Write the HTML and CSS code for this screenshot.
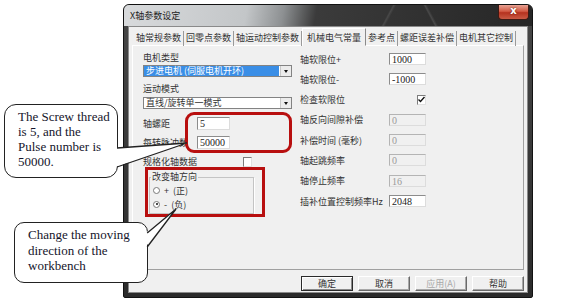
FILE: index.html
```html
<!DOCTYPE html>
<html lang="zh">
<head>
    <meta charset="UTF-8">
    <title>X轴参数设定</title>
    <link rel="stylesheet" href="styles.css">
</head>
<body>

<div class="stage">

    <!-- Dialogfenster -->
    <div class="window">
        <div class="titlebar">
            <span class="title">X轴参数设定</span>
            <span class="close">x</span>
        </div>

        <div class="client">
            <div class="tabs">
                <span class="tab">轴常规参数</span>
                <span class="tab">回零点参数</span>
                <span class="tab">轴运动控制参数</span>
                <span class="tab active">机械电气常量</span>
                <span class="tab">参考点</span>
                <span class="tab">螺距误差补偿</span>
                <span class="tab">电机其它控制</span>
            </div>

            <div class="panel">
                <div class="col-left">
                    <div class="caption">电机类型</div>
                    <div class="combo selected">
                        <span class="combo-text">步进电机 (伺服电机开环)</span>
                        <span class="combo-btn"></span>
                    </div>
                    <div class="caption second">运动模式</div>
                    <div class="combo second">
                        <span class="combo-text">直线/旋转单一模式</span>
                        <span class="combo-btn"></span>
                    </div>

                    <div class="field first">
                        <span class="field-label">轴螺距</span>
                        <span class="edit">5</span>
                    </div>
                    <div class="field">
                        <span class="field-label">每转脉冲数</span>
                        <span class="edit">50000</span>
                    </div>
                    <div class="field">
                        <span class="field-label wide">规格化轴数据</span>
                        <span class="check"></span>
                    </div>

                    <fieldset class="group">
                        <legend>改变轴方向</legend>
                        <div class="radio-row"><span class="radio"></span>+&nbsp;&nbsp;(正)</div>
                        <div class="radio-row"><span class="radio on"></span>-&nbsp;&nbsp;(负)</div>
                    </fieldset>
                </div>

                <div class="col-right">
                    <div class="row"><span class="row-label">轴软限位+</span><span class="edit">1000</span></div>
                    <div class="row"><span class="row-label">轴软限位-</span><span class="edit">-1000</span></div>
                    <div class="row">
                        <span class="row-label">检查软限位</span>
                        <span class="check on">
                            <svg width="7" height="7" viewBox="0 0 7 7"><path d="M0.5 3.5 L2.5 5.5 L6.5 1" fill="none" stroke="#111" stroke-width="1.4"/></svg>
                        </span>
                    </div>
                    <div class="row"><span class="row-label">轴反向间隙补偿</span><span class="edit off">0</span></div>
                    <div class="row"><span class="row-label">补偿时间 (毫秒)</span><span class="edit off">0</span></div>
                    <div class="row"><span class="row-label">轴起跳频率</span><span class="edit off">0</span></div>
                    <div class="row"><span class="row-label">轴停止频率</span><span class="edit off">16</span></div>
                    <div class="row"><span class="row-label">插补位置控制频率Hz</span><span class="edit">2048</span></div>
                </div>
            </div>

            <div class="buttons">
                <span class="btn default">确定</span>
                <span class="btn">取消</span>
                <span class="btn disabled">应用(A)</span>
                <span class="btn">帮助</span>
            </div>
        </div>
    </div>

    <!-- Markierungen und Sprechblasen -->
    <div class="mark mark-round"></div>
    <div class="mark mark-square"></div>

    <div class="bubble bubble-a">The Screw thread<br>is 5, and the<br>Pulse number is<br>50000.</div>
    <div class="bubble bubble-b">Change the moving<br>direction of the<br>workbench</div>

    <svg class="tails" width="563" height="300">
        <polygon points="115.5,148 187,143 115.5,167" fill="#fff"/>
        <polyline points="117,148 187,143 117,167" fill="none" stroke="#222" stroke-width="1.3"/>
        <polygon points="145.5,233 176,209 145.5,247" fill="#fff"/>
        <polyline points="147.2,233 176,209 147.2,247" fill="none" stroke="#222" stroke-width="1.3"/>
    </svg>
</div>

</body>
</html>
```

FILE: styles.css
```css
* {
    box-sizing: border-box;
}

body {
    margin: 0;
    background-color: #fff;
}

.stage {
    position: relative;
    width: 563px;
    height: 300px;
    overflow: hidden;
    padding: 4px 0 0 123px;
    font-family: "Noto Sans CJK SC", sans-serif;
    font-size: 9px;
    color: #333;
}

/* Fenster */
.window {
    width: 410px;
    height: 294px;
    display: flex;
    flex-direction: column;
    background: linear-gradient(#474747, #2b2b2b);
    border: 1px solid #121212;
    border-radius: 6px 6px 2px 2px;
}

.titlebar {
    height: 21px;
    display: flex;
    justify-content: space-between;
    align-items: flex-start;
    padding-left: 6px;
    border-radius: 5px 5px 0 0;
    background:
        linear-gradient(62deg, transparent 0 74%, rgba(255, 255, 255, 0.12) 74.4%, transparent 75%),
        linear-gradient(118deg, transparent 0 64%, rgba(255, 255, 255, 0.1) 64.4%, transparent 65%),
        linear-gradient(100deg, #d8dadc 0%, #c3c6c8 30%, #8d9092 39%, #3b3b3b 47%, #262626 100%);
}

.title {
    line-height: 21px;
    color: #1c1c1c;
}

.close {
    width: 31px;
    height: 15px;
    margin-right: 3px;
    text-align: center;
    line-height: 12px;
    font-family: "DejaVu Sans", sans-serif;
    font-size: 10px;
    font-weight: bold;
    color: #fff;
    text-shadow: 0 0 2px #5a1208;
    background: linear-gradient(#e7a394, #d25a44 45%, #b5321f 55%, #c95a44);
    border: 1px solid #3d1a14;
    border-top: none;
    border-radius: 0 0 4px 4px;
}

.client {
    flex: 1;
    margin: 0 4px 4px;
    padding: 1px 3px 0 3px;
    display: flex;
    flex-direction: column;
    background-color: #f0f0f0;
    border: 1px solid #8a8a8a;
}

/* Registerkarten */
.tabs {
    height: 18px;
    display: flex;
    align-items: flex-end;
    margin-bottom: -1px;
    position: relative;
    z-index: 1;
}

.tab {
    height: 15px;
    line-height: 14px;
    padding: 0 2px;
    border-right: 1px solid #9a9a9a;
    white-space: nowrap;
}

.tab:first-child {
    padding-left: 4px;
}

.tab.active {
    height: 18px;
    line-height: 17px;
    padding: 0 4px;
    background-color: #f0f0f0;
    border: 1px solid;
    border-color: #fff #8a8a8a transparent #fff;
}

.panel {
    height: 225px;
    display: flex;
    gap: 7px;
    padding: 6px 0 0 10px;
    border: 1px solid;
    border-color: #fff #a0a0a0 #a0a0a0 #fff;
}

/* linke Spalte */
.col-left {
    width: 150px;
}

.caption {
    height: 12px;
    line-height: 12px;
}

.caption.second {
    margin-top: 6px;
}

.combo {
    width: 149px;
    height: 12px;
    margin-top: 1px;
    display: flex;
    background-color: #fff;
    border: 1px solid #838383;
}

.combo.second {
    margin-top: 2px;
}

.combo-text {
    flex: 1;
    line-height: 10px;
    padding-left: 2px;
    white-space: nowrap;
}

.selected .combo-text {
    margin: 0 1px 0 0;
    background-color: #3a8ee6;
    color: #fff;
}

.combo-btn {
    width: 11px;
    position: relative;
    background-color: #ececec;
    border-left: 1px solid #c8c8c8;
}

.combo-btn::after {
    content: "";
    position: absolute;
    left: 3px;
    top: 4px;
    border-left: 2.5px solid transparent;
    border-right: 2.5px solid transparent;
    border-top: 3px solid #111;
}

.field {
    height: 13px;
    margin-top: 6px;
    display: flex;
    align-items: center;
}

.field.first {
    margin-top: 8px;
}

.field-label {
    width: 54px;
    white-space: nowrap;
}

.field-label.wide {
    width: 100px;
}

.edit {
    width: 33px;
    height: 13px;
    padding-left: 2px;
    font-family: "Liberation Serif", serif;
    font-size: 10px;
    line-height: 11px;
    color: #222;
    background-color: #fff;
    border: 1px solid;
    border-color: #8c8c8c #dcdcdc #dcdcdc #8c8c8c;
}

.edit.off {
    background-color: #f0f0f0;
    color: #9a9a9a;
    border-color: #b4b4b4 #dcdcdc #dcdcdc #b4b4b4;
}

.check {
    width: 9px;
    height: 10px;
    display: flex;
    align-items: center;
    justify-content: center;
    background-color: #fff;
    border: 1px solid;
    border-color: #7c7c7c #e0e0e0 #e0e0e0 #7c7c7c;
}

.group {
    width: 105px;
    height: 43px;
    margin: 3px 0 0 6px;
    padding: 0 0 2px 1px;
    border: 1px solid #c4c4c4;
    box-shadow: 1px 1px 0 #fff;
}

.group legend {
    padding: 0 1px;
    line-height: 12px;
}

.radio-row {
    height: 14px;
    display: flex;
    align-items: center;
    padding-left: 2px;
}

.radio {
    width: 7px;
    height: 7px;
    margin-right: 4px;
    border-radius: 50%;
    background-color: #fff;
    border: 1px solid #7a7a7a;
    position: relative;
}

.radio.on::after {
    content: "";
    position: absolute;
    left: 1.5px;
    top: 1.5px;
    width: 2px;
    height: 2px;
    border-radius: 50%;
    background-color: #111;
}

/* rechte Spalte */
.col-right {
    width: 126px;
    display: flex;
    flex-direction: column;
    gap: 6.3px;
}

.row {
    height: 14px;
    display: flex;
    align-items: center;
}

.row-label {
    width: 89px;
    white-space: nowrap;
}

.row .edit {
    width: 37px;
    height: 12px;
}

.row .check {
    margin-left: 28px;
}

/* Schaltflächen */
.buttons {
    display: flex;
    justify-content: flex-end;
    gap: 5px;
    margin-top: 6px;
}

.btn {
    width: 52px;
    height: 15px;
    line-height: 13px;
    text-align: center;
    background-color: #f0f0f0;
    border: 1px solid;
    border-color: #fff #6a6a6a #6a6a6a #fff;
    box-shadow: inset -1px -1px 0 #a8a8a8;
}

.btn.default {
    border-color: #2a2a2a;
    box-shadow: inset 1px 1px 0 #fff, inset -1px -1px 0 #8a8a8a;
}

.btn.disabled {
    color: #a8a8a8;
}

/* Markierungen */
.mark {
    position: absolute;
    border: 3px solid #b80f0f;
}

.mark-round {
    left: 185px;
    top: 112px;
    width: 107px;
    height: 41px;
    border-radius: 9px;
}

.mark-square {
    left: 145px;
    top: 167px;
    width: 120px;
    height: 50px;
}

/* Sprechblasen */
.bubble {
    position: absolute;
    background-color: #fff;
    border: 1.5px solid #222;
    border-radius: 12px;
    font-family: "Liberation Serif", serif;
    font-size: 13px;
    line-height: 15px;
    color: #15152b;
    white-space: nowrap;
}

.bubble-a {
    left: 4px;
    top: 104px;
    width: 114px;
    height: 74px;
    padding: 4px 0 0 13px;
}

.bubble-b {
    left: 14px;
    top: 222px;
    width: 134px;
    height: 61px;
    padding: 4px 0 0 13px;
    line-height: 15.5px;
    border-radius: 10px;
}

.tails {
    position: absolute;
    left: 0;
    top: 0;
    pointer-events: none;
}
```
